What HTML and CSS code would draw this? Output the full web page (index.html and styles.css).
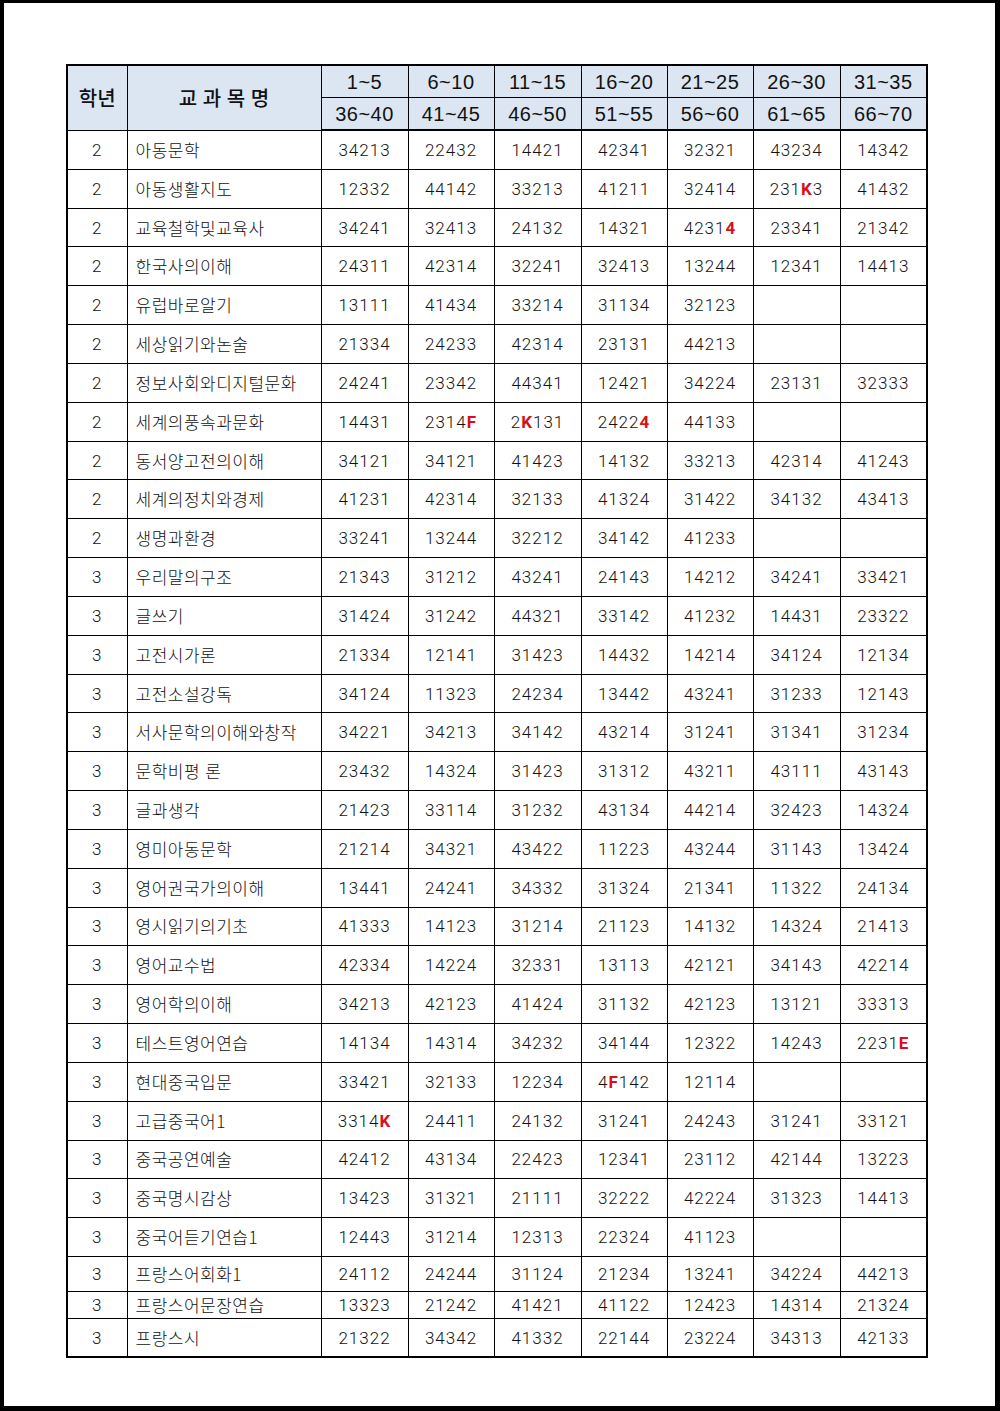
FILE: index.html
```html
<!DOCTYPE html>
<html lang="ko">
<head>
<meta charset="utf-8">
<title>교과목 정답표</title>
<link rel="stylesheet" href="styles.css">
</head>
<body>
<div class="page">
<table class="grid">
<colgroup>
<col class="c-yr"><col class="c-name">
<col class="c-n"><col class="c-n2"><col class="c-n"><col class="c-n2"><col class="c-n2"><col class="c-n"><col class="c-n">
</colgroup>
<thead>
<tr class="h1">
<th rowspan="2" class="hk">학년</th>
<th rowspan="2" class="hk hname">교 과 목 명</th>
<th>1~5</th><th>6~10</th><th>11~15</th><th>16~20</th><th>21~25</th><th>26~30</th><th>31~35</th>
</tr>
<tr class="h2">
<th>36~40</th><th>41~45</th><th>46~50</th><th>51~55</th><th>56~60</th><th>61~65</th><th>66~70</th>
</tr>
</thead>
<tbody>
<tr><td>2</td><td class="nm">아동문학</td><td>34213</td><td>22432</td><td>14421</td><td>42341</td><td>32321</td><td>43234</td><td>14342</td></tr>
<tr><td>2</td><td class="nm">아동생활지도</td><td>12332</td><td>44142</td><td>33213</td><td>41211</td><td>32414</td><td>231<b>K</b>3</td><td>41432</td></tr>
<tr><td>2</td><td class="nm">교육철학및교육사</td><td>34241</td><td>32413</td><td>24132</td><td>14321</td><td>4231<b>4</b></td><td>23341</td><td>21342</td></tr>
<tr><td>2</td><td class="nm">한국사의이해</td><td>24311</td><td>42314</td><td>32241</td><td>32413</td><td>13244</td><td>12341</td><td>14413</td></tr>
<tr><td>2</td><td class="nm">유럽바로알기</td><td>13111</td><td>41434</td><td>33214</td><td>31134</td><td>32123</td><td></td><td></td></tr>
<tr><td>2</td><td class="nm">세상읽기와논술</td><td>21334</td><td>24233</td><td>42314</td><td>23131</td><td>44213</td><td></td><td></td></tr>
<tr><td>2</td><td class="nm">정보사회와디지털문화</td><td>24241</td><td>23342</td><td>44341</td><td>12421</td><td>34224</td><td>23131</td><td>32333</td></tr>
<tr><td>2</td><td class="nm">세계의풍속과문화</td><td>14431</td><td>2314<b>F</b></td><td>2<b>K</b>131</td><td>2422<b>4</b></td><td>44133</td><td></td><td></td></tr>
<tr><td>2</td><td class="nm">동서양고전의이해</td><td>34121</td><td>34121</td><td>41423</td><td>14132</td><td>33213</td><td>42314</td><td>41243</td></tr>
<tr><td>2</td><td class="nm">세계의정치와경제</td><td>41231</td><td>42314</td><td>32133</td><td>41324</td><td>31422</td><td>34132</td><td>43413</td></tr>
<tr><td>2</td><td class="nm">생명과환경</td><td>33241</td><td>13244</td><td>32212</td><td>34142</td><td>41233</td><td></td><td></td></tr>
<tr><td>3</td><td class="nm">우리말의구조</td><td>21343</td><td>31212</td><td>43241</td><td>24143</td><td>14212</td><td>34241</td><td>33421</td></tr>
<tr><td>3</td><td class="nm">글쓰기</td><td>31424</td><td>31242</td><td>44321</td><td>33142</td><td>41232</td><td>14431</td><td>23322</td></tr>
<tr><td>3</td><td class="nm">고전시가론</td><td>21334</td><td>12141</td><td>31423</td><td>14432</td><td>14214</td><td>34124</td><td>12134</td></tr>
<tr><td>3</td><td class="nm">고전소설강독</td><td>34124</td><td>11323</td><td>24234</td><td>13442</td><td>43241</td><td>31233</td><td>12143</td></tr>
<tr><td>3</td><td class="nm">서사문학의이해와창작</td><td>34221</td><td>34213</td><td>34142</td><td>43214</td><td>31241</td><td>31341</td><td>31234</td></tr>
<tr><td>3</td><td class="nm">문학비평 론</td><td>23432</td><td>14324</td><td>31423</td><td>31312</td><td>43211</td><td>43111</td><td>43143</td></tr>
<tr><td>3</td><td class="nm">글과생각</td><td>21423</td><td>33114</td><td>31232</td><td>43134</td><td>44214</td><td>32423</td><td>14324</td></tr>
<tr><td>3</td><td class="nm">영미아동문학</td><td>21214</td><td>34321</td><td>43422</td><td>11223</td><td>43244</td><td>31143</td><td>13424</td></tr>
<tr><td>3</td><td class="nm">영어권국가의이해</td><td>13441</td><td>24241</td><td>34332</td><td>31324</td><td>21341</td><td>11322</td><td>24134</td></tr>
<tr><td>3</td><td class="nm">영시읽기의기초</td><td>41333</td><td>14123</td><td>31214</td><td>21123</td><td>14132</td><td>14324</td><td>21413</td></tr>
<tr><td>3</td><td class="nm">영어교수법</td><td>42334</td><td>14224</td><td>32331</td><td>13113</td><td>42121</td><td>34143</td><td>42214</td></tr>
<tr><td>3</td><td class="nm">영어학의이해</td><td>34213</td><td>42123</td><td>41424</td><td>31132</td><td>42123</td><td>13121</td><td>33313</td></tr>
<tr><td>3</td><td class="nm">테스트영어연습</td><td>14134</td><td>14314</td><td>34232</td><td>34144</td><td>12322</td><td>14243</td><td>2231<b>E</b></td></tr>
<tr><td>3</td><td class="nm">현대중국입문</td><td>33421</td><td>32133</td><td>12234</td><td>4<b>F</b>142</td><td>12114</td><td></td><td></td></tr>
<tr><td>3</td><td class="nm">고급중국어1</td><td>3314<b>K</b></td><td>24411</td><td>24132</td><td>31241</td><td>24243</td><td>31241</td><td>33121</td></tr>
<tr><td>3</td><td class="nm">중국공연예술</td><td>42412</td><td>43134</td><td>22423</td><td>12341</td><td>23112</td><td>42144</td><td>13223</td></tr>
<tr><td>3</td><td class="nm">중국명시감상</td><td>13423</td><td>31321</td><td>21111</td><td>32222</td><td>42224</td><td>31323</td><td>14413</td></tr>
<tr><td>3</td><td class="nm">중국어듣기연습1</td><td>12443</td><td>31214</td><td>12313</td><td>22324</td><td>41123</td><td></td><td></td></tr>
<tr class="r35"><td>3</td><td class="nm">프랑스어회화1</td><td>24112</td><td>24244</td><td>31124</td><td>21234</td><td>13241</td><td>34224</td><td>44213</td></tr>
<tr class="r27"><td>3</td><td class="nm">프랑스어문장연습</td><td>13323</td><td>21242</td><td>41421</td><td>41122</td><td>12423</td><td>14314</td><td>21324</td></tr>
<tr class="r39"><td>3</td><td class="nm">프랑스시</td><td>21322</td><td>34342</td><td>41332</td><td>22144</td><td>23224</td><td>34313</td><td>42133</td></tr>
</tbody>
</table>
</div>
</body>
</html>
```

FILE: styles.css
```css
html, body {
  margin: 0;
  padding: 0;
  background: #ffffff;
}

.page {
  box-sizing: border-box;
  width: 1000px;
  height: 1411px;
  border-style: solid;
  border-color: #000;
  border-width: 3px 5px 5px 4px;
  padding: 61px 0 0 62px;
  background: #fff;
}

.grid {
  border-collapse: collapse;
  table-layout: fixed;
  width: 862px;
  border: 2px solid #000;
  font-family: "Roboto", "Noto Sans CJK KR", sans-serif;
  font-weight: 300;
  color: #111;
}

.c-yr { width: 60px; }
.c-name { width: 194px; }
.c-n { width: 87px; }
.c-n2 { width: 86px; }

.grid th {
  background: #dce6f2;
  border: 1px solid #000;
  font-family: "Liberation Sans", "Noto Sans CJK KR", sans-serif;
  font-weight: normal;
  font-size: 20px;
  line-height: 22px;
  letter-spacing: 0.5px;
  padding: 0;
  height: 31px;
  text-align: center;
  vertical-align: middle;
}

.grid .h2 th {
  border-bottom: 2px solid #000;
}

.grid th.hk {
  font-family: "Noto Sans CJK KR", sans-serif;
  font-weight: 500;
  letter-spacing: 0;
}

.grid td {
  border: 1px solid #000;
  height: 37.83px;
  padding: 0;
  font-size: 17px;
  line-height: 20px;
  letter-spacing: 1px;
  text-align: center;
  vertical-align: middle;
  white-space: nowrap;
}

.grid td.nm {
  text-align: left;
  padding: 0 0 0 8px;
  font-family: "Noto Sans CJK KR", sans-serif;
  font-weight: 300;
  letter-spacing: 0.5px;
}

.grid td b {
  color: #d8101c;
  font-weight: bold;
}

.grid .r35 td { height: 34px; }
.grid .r27 td { height: 26px; }
.grid .r39 td { height: 37px; }
```
